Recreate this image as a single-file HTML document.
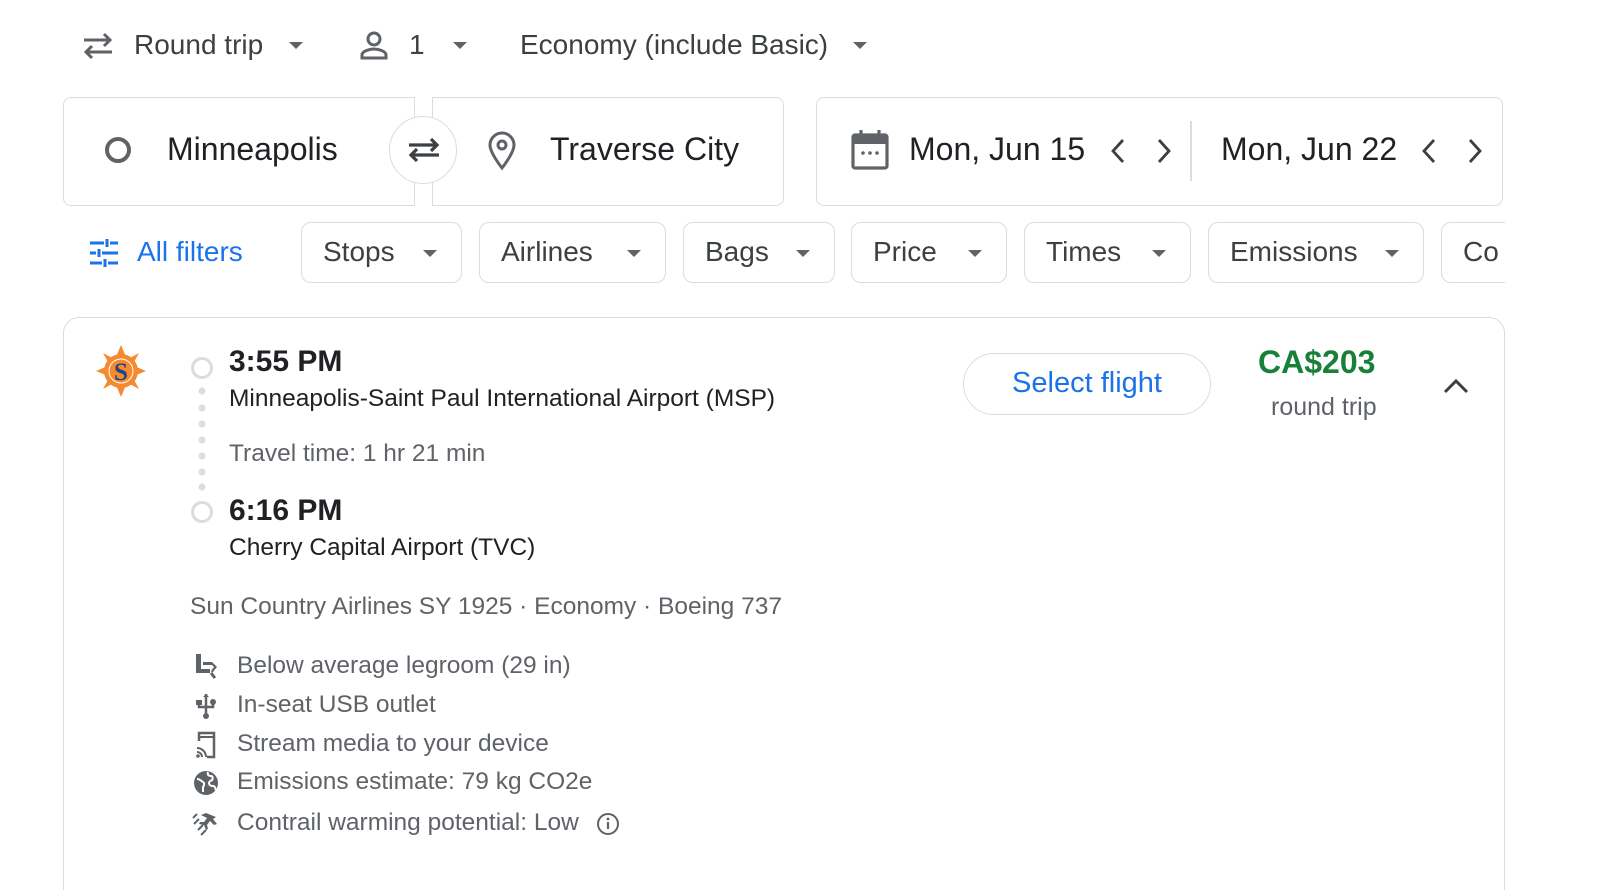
<!DOCTYPE html>
<html style="overflow:hidden;height:890px"><head><style>
html,body{margin:0;padding:0}
body{width:1600px;height:890px;overflow:hidden;background:#fff;font-family:"Liberation Sans",Arial,sans-serif;color:#202124}
#w{position:relative;width:1600px;height:890px;overflow:hidden}
.a{position:absolute;white-space:nowrap}
.box{position:absolute;border:1.5px solid #dadce0;box-sizing:border-box;background:#fff}
.chip{position:absolute;top:222px;height:61px;border:1.5px solid #dadce0;border-radius:10px;box-sizing:border-box;font-size:28px;color:#3c4043;line-height:58px;padding-left:21px}
.tri{display:inline-block;width:0;height:0;border-left:7px solid transparent;border-right:7px solid transparent;border-top:7px solid #5f6368;vertical-align:middle}
.chip .tri{position:absolute;right:24px;top:27px}
.g{color:#5f6368}
</style></head><body><div id="w">
<!-- top row -->
<svg class="a" style="left:80px;top:30px" width="36" height="32" viewBox="0 0 36 32"><path d="M4 10h26M24 4l6 6-6 6M32 22H6M12 16l-6 6 6 6" stroke="#5f6368" stroke-width="3" fill="none"/></svg>
<div class="a" style="left:134px;top:29px;font-size:28px;color:#3c4043">Round trip</div>
<span class="a tri" style="left:289px;top:42px"></span>
<svg class="a" style="left:358px;top:29px" width="32" height="32" viewBox="0 0 32 32"><circle cx="16" cy="10" r="6" stroke="#5f6368" stroke-width="3" fill="none"/><path d="M4 29v-3c0-4 8-6 12-6s12 2 12 6v3z" stroke="#5f6368" stroke-width="3" fill="none"/></svg>
<div class="a" style="left:409px;top:29px;font-size:28px;color:#3c4043">1</div>
<span class="a tri" style="left:453px;top:42px"></span>
<div class="a" style="left:520px;top:29px;font-size:28px;color:#3c4043">Economy (include Basic)</div>
<span class="a tri" style="left:853px;top:42px"></span>
<!-- inputs -->
<div class="box" style="left:63px;top:97px;width:352px;height:109px;border-radius:8px 0 0 8px"></div>
<div class="box" style="left:432px;top:97px;width:352px;height:109px;border-radius:0 8px 8px 0"></div>
<div class="a" style="left:105px;top:137px;width:18px;height:18px;border:4.5px solid #5f6368;border-radius:50%"></div>
<div class="a" style="left:167px;top:131px;font-size:32px;color:#202124">Minneapolis</div>
<div class="a" style="left:389px;top:116px;width:68px;height:68px;border:1.5px solid #dadce0;border-radius:50%;background:#fff;box-sizing:border-box"></div>
<svg class="a" style="left:403px;top:134px" width="42" height="32" viewBox="0 0 42 32"><path d="M6 11h28M28 5l6 6-6 6M36 21H8M14 15l-6 6 6 6" stroke="#3c4043" stroke-width="3.2" fill="none"/></svg>
<svg class="a" style="left:486px;top:131px" width="32" height="40" viewBox="0 0 32 40"><path d="M16 37C16 37 4 22 4 14a12 12 0 0 1 24 0c0 8-12 23-12 23z" stroke="#5f6368" stroke-width="3" fill="none"/><circle cx="16" cy="14" r="4" stroke="#5f6368" stroke-width="3" fill="none"/></svg>
<div class="a" style="left:550px;top:131px;font-size:32px">Traverse City</div>
<div class="box" style="left:816px;top:97px;width:687px;height:109px;border-radius:8px"></div>
<div class="a" style="left:1190px;top:121px;width:1.5px;height:60px;background:#dadce0"></div>
<svg class="a" style="left:850px;top:129px" width="40" height="42" viewBox="0 0 40 42"><rect x="3" y="6" width="34" height="33" rx="2" stroke="#5f6368" stroke-width="3.2" fill="none"/><rect x="3" y="6" width="34" height="9" fill="#5f6368"/><path d="M11 1v8M29 1v8" stroke="#5f6368" stroke-width="3.2"/><circle cx="13" cy="24" r="1.8" fill="#5f6368"/><circle cx="20" cy="24" r="1.8" fill="#5f6368"/><circle cx="27" cy="24" r="1.8" fill="#5f6368"/></svg>
<div class="a" style="left:909px;top:131px;font-size:32px">Mon, Jun 15</div>
<div class="a" style="left:1221px;top:131px;font-size:32px">Mon, Jun 22</div>
<svg class="a" style="left:1105px;top:137px" width="80" height="28" viewBox="0 0 80 28"><path d="M18 3l-10 11 10 11M54 3l10 11-10 11" stroke="#3c4043" stroke-width="2.8" fill="none"/></svg>
<svg class="a" style="left:1416px;top:137px" width="80" height="28" viewBox="0 0 80 28"><path d="M18 3l-10 11 10 11M54 3l10 11-10 11" stroke="#3c4043" stroke-width="2.8" fill="none"/></svg>
<!-- filters -->
<svg class="a" style="left:89px;top:239px" width="30" height="28" viewBox="0 0 30 28"><path d="M1 4h14M21 4h8M18 0v8M1 14h6M13 14h16M10 10v8M1 24h12M19 24h10M16 20v8" stroke="#1a73e8" stroke-width="3" fill="none"/></svg>
<div class="a" style="left:137px;top:236px;font-size:28px;color:#1a73e8">All filters</div>
<div class="chip" style="left:301px;width:161px">Stops<span class="tri"></span></div>
<div class="chip" style="left:479px;width:187px">Airlines<span class="tri"></span></div>
<div class="chip" style="left:683px;width:152px">Bags<span class="tri"></span></div>
<div class="chip" style="left:851px;width:156px">Price<span class="tri"></span></div>
<div class="chip" style="left:1024px;width:167px">Times<span class="tri"></span></div>
<div class="chip" style="left:1208px;width:216px">Emissions<span class="tri"></span></div>
<div style="position:absolute;left:0;top:0;width:1505px;height:300px;overflow:hidden"><div class="chip" style="left:1441px;width:160px">Co</div></div>
<!-- card -->
<div class="box" style="left:63px;top:317px;width:1442px;height:573px;border-radius:16px 16px 0 0;border-bottom:none"></div>
<svg class="a" style="left:96px;top:345px" width="50" height="52" viewBox="0 0 50 52"><g fill="#f58a2e"><polygon points="25,0 30,12 20,12"/><polygon points="25,52 30,40 20,40"/><polygon points="0,26 12,21 12,31"/><polygon points="50,26 38,21 38,31"/><polygon points="7,8 18,14 13,19"/><polygon points="43,8 32,14 37,19"/><polygon points="7,44 18,38 13,33"/><polygon points="43,44 32,38 37,33"/><circle cx="25" cy="26" r="17"/></g><circle cx="25" cy="26" r="12" fill="#f58a2e" stroke="#fff" stroke-width="1"/><text x="25" y="35" text-anchor="middle" font-family="Liberation Serif" font-weight="bold" font-size="25" fill="#1c4587">S</text></svg>
<div class="a" style="left:191px;top:357px;width:16px;height:16px;border:3px solid #dadce0;border-radius:50%"></div>
<div class="a" style="left:191px;top:501px;width:16px;height:16px;border:3px solid #dadce0;border-radius:50%"></div>
<svg class="a" style="left:196px;top:385px" width="12" height="110"><g fill="#dadce0"><circle cx="6" cy="6" r="3.5"/><circle cx="6" cy="23" r="3.5"/><circle cx="6" cy="39" r="3.5"/><circle cx="6" cy="55" r="3.5"/><circle cx="6" cy="71" r="3.5"/><circle cx="6" cy="87" r="3.5"/><circle cx="6" cy="102" r="3.5"/></g></svg>
<div class="a" style="left:229px;top:345px;font-size:30px;font-weight:bold">3:55 PM</div>
<div class="a" style="left:229px;top:385px;font-size:24.5px">Minneapolis-Saint Paul International Airport (MSP)</div>
<div class="a g" style="left:229px;top:440px;font-size:24.5px">Travel time: 1 hr 21 min</div>
<div class="a" style="left:229px;top:494px;font-size:30px;font-weight:bold">6:16 PM</div>
<div class="a" style="left:229px;top:534px;font-size:24.5px">Cherry Capital Airport (TVC)</div>
<div class="a g" style="left:190px;top:593px;font-size:24.5px">Sun Country Airlines SY 1925 · Economy · Boeing 737</div>
<div class="a" style="left:963px;top:353px;width:248px;height:62px;border:1.5px solid #dadce0;border-radius:31px;box-sizing:border-box;text-align:center;line-height:59px;font-size:29px;color:#1a73e8">Select flight</div>
<div class="a" style="left:1258px;top:344px;font-size:32px;font-weight:bold;color:#188038">CA$203</div>
<div class="a g" style="left:1271px;top:393px;font-size:25px">round trip</div>
<svg class="a" style="left:1442px;top:376px" width="28" height="20"><path d="M3 16L14 5l11 11" stroke="#3c4043" stroke-width="3" fill="none"/></svg>
<!-- amenities -->
<svg class="a" style="left:195px;top:654px" width="24" height="26" viewBox="0 0 24 26"><path d="M1 0h5v15h9v4H1z" fill="#5f6368"/><path d="M8 8h9l5 5-5 6-1-2 3-4-2-2H8z" fill="#5f6368"/><path d="M16 19l4 5" stroke="#5f6368" stroke-width="3"/></svg>
<div class="a g" style="left:237px;top:652px;font-size:24.5px">Below average legroom (29 in)</div>
<svg class="a" style="left:195px;top:693px" width="22" height="26" viewBox="0 0 22 26"><path d="M11 1v23M4 10v4h14v-4M11 18" stroke="#5f6368" stroke-width="2.5" fill="none"/><rect x="1" y="7" width="6" height="5" fill="#5f6368"/><circle cx="18" cy="9" r="3" fill="#5f6368"/><circle cx="11" cy="23" r="3" fill="#5f6368"/><path d="M8 4l3-3 3 3z" fill="#5f6368"/></svg>
<div class="a g" style="left:237px;top:691px;font-size:24.5px">In-seat USB outlet</div>
<svg class="a" style="left:196px;top:731px" width="20" height="28" viewBox="0 0 20 28"><path d="M3 10V2h15v24h-7" stroke="#5f6368" stroke-width="2.5" fill="none"/><path d="M3 6h15" stroke="#5f6368" stroke-width="2"/><path d="M1 17a9 9 0 0 1 9 9M1 21a5 5 0 0 1 5 5" stroke="#5f6368" stroke-width="2" fill="none"/><circle cx="2" cy="25" r="1.8" fill="#5f6368"/></svg>
<div class="a g" style="left:237px;top:730px;font-size:24.5px">Stream media to your device</div>
<svg class="a" style="left:193px;top:770px" width="26" height="26" viewBox="0 0 26 26"><circle cx="13" cy="13" r="12" fill="#5f6368"/><path d="M4 9c3 0 4 2 6 3s1 4 0 5v5M15 2c-1 3 1 4 3 4s2 3 1 4-3 1-3 3 2 3 4 3 3 3 2 4" stroke="#fff" stroke-width="2" fill="none"/></svg>
<div class="a g" style="left:237px;top:768px;font-size:24.5px">Emissions estimate: 79 kg CO2e</div>
<svg class="a" style="left:192px;top:810px" width="28" height="26" viewBox="0 0 28 26"><path d="M14 3l10 4-3 2 4 5-3 1-4-4-3 4 1 4-2 1-2-5-5-1 1-2 4 0 3-4-6-3z" fill="#5f6368"/><path d="M2 14l5-5M6 20l5-5M9 25l5-5M1 8l4-4" stroke="#5f6368" stroke-width="2"/></svg>
<div class="a g" style="left:237px;top:809px;font-size:24.5px">Contrail warming potential: Low</div>
<svg class="a" style="left:596px;top:812px" width="24" height="24" viewBox="0 0 24 24"><circle cx="12" cy="12" r="10" stroke="#5f6368" stroke-width="2" fill="none"/><path d="M12 10v7" stroke="#5f6368" stroke-width="2.2"/><circle cx="12" cy="7" r="1.4" fill="#5f6368"/></svg>
</div></body></html>
